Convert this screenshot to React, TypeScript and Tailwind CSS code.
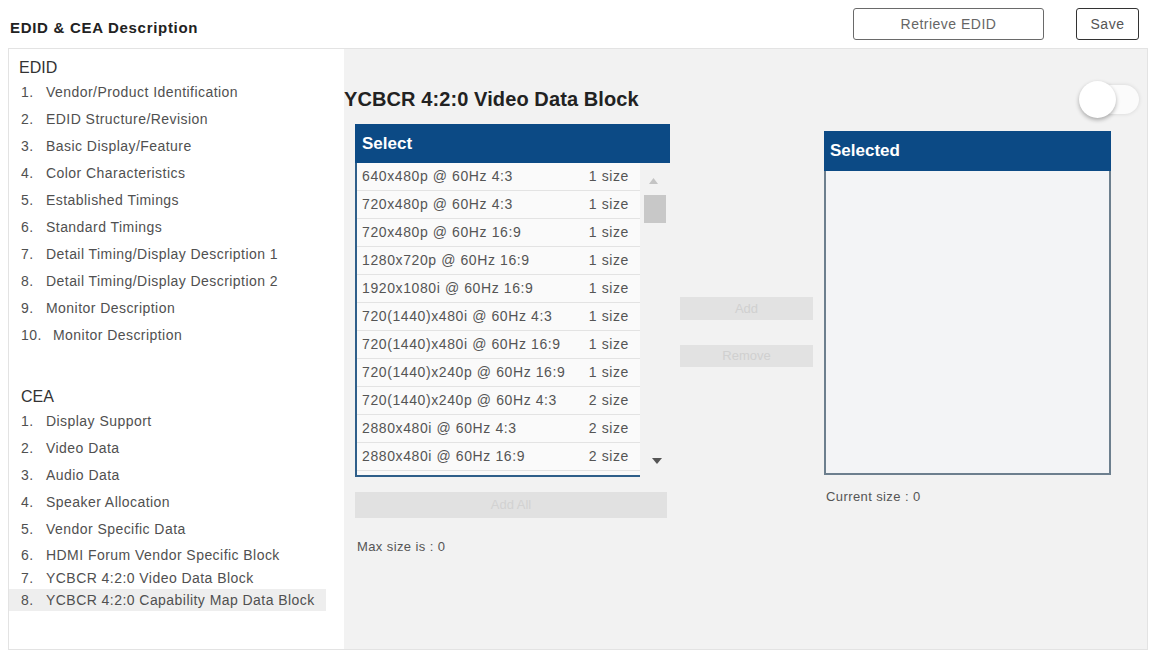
// ---------------------------------------------------------------------------
// EDID & CEA description editor
// ---------------------------------------------------------------------------

type NavItem = { num: string; label: string; row: string; numWidth?: string };

const EDID_ITEMS: NavItem[] = [
  { num: "1.", label: "Vendor/Product Identification", row: "h-[27px]" },
  { num: "2.", label: "EDID Structure/Revision", row: "h-[27px]" },
  { num: "3.", label: "Basic Display/Feature", row: "h-[27px]" },
  { num: "4.", label: "Color Characteristics", row: "h-[27px]" },
  { num: "5.", label: "Established Timings", row: "h-[27px]" },
  { num: "6.", label: "Standard Timings", row: "h-[27px]" },
  { num: "7.", label: "Detail Timing/Display Description 1", row: "h-[27px]" },
  { num: "8.", label: "Detail Timing/Display Description 2", row: "h-[27px]" },
  { num: "9.", label: "Monitor Description", row: "h-[27px]" },
  { num: "10.", label: "Monitor Description", row: "h-[27px]", numWidth: "w-[32px]" },
];

const CEA_ITEMS: NavItem[] = [
  { num: "1.", label: "Display Support", row: "h-[27px]" },
  { num: "2.", label: "Video Data", row: "h-[27px]" },
  { num: "3.", label: "Audio Data", row: "h-[27px]" },
  { num: "4.", label: "Speaker Allocation", row: "h-[27px]" },
  { num: "5.", label: "Vendor Specific Data", row: "h-[27px]" },
  { num: "6.", label: "HDMI Forum Vendor Specific Block", row: "h-[24px]" },
  { num: "7.", label: "YCBCR 4:2:0 Video Data Block", row: "h-[22px]" },
  { num: "8.", label: "YCBCR 4:2:0 Capability Map Data Block", row: "h-[22px]" },
];

const TIMINGS: [string, string][] = [
  ["640x480p @ 60Hz 4:3", "1 size"],
  ["720x480p @ 60Hz 4:3", "1 size"],
  ["720x480p @ 60Hz 16:9", "1 size"],
  ["1280x720p @ 60Hz 16:9", "1 size"],
  ["1920x1080i @ 60Hz 16:9", "1 size"],
  ["720(1440)x480i @ 60Hz 4:3", "1 size"],
  ["720(1440)x480i @ 60Hz 16:9", "1 size"],
  ["720(1440)x240p @ 60Hz 16:9", "1 size"],
  ["720(1440)x240p @ 60Hz 4:3", "2 size"],
  ["2880x480i @ 60Hz 4:3", "2 size"],
  ["2880x480i @ 60Hz 16:9", "2 size"],
];

function NavList({ items, active }: { items: NavItem[]; active?: string }) {
  return (
    <ul>
      {items.map((item) => (
        <li
          key={item.num}
          className={`${item.row} flex w-[317px] items-center pl-[12px] text-[14px] tracking-[0.45px] text-[#505050] ${
            active === item.num ? "bg-[#eeeeee]" : ""
          }`}
        >
          <span className={`${item.numWidth ?? "w-[25px]"} shrink-0`}>{item.num}</span>
          <span>{item.label}</span>
        </li>
      ))}
    </ul>
  );
}

function Toggle() {
  return (
    <div className="relative h-[37px] w-[60px]">
      <div className="absolute top-[4px] right-0 bottom-[4px] left-[12px] rounded-full bg-[#fbfbfb] shadow-[0_0_4px_rgba(0,0,0,0.12)]" />
      <div className="absolute top-0 left-0 h-[37px] w-[37px] rounded-full bg-white shadow-[0_2px_4px_rgba(0,0,0,0.3)]" />
    </div>
  );
}

export default function App() {
  return (
    <div className="h-[654px] w-[1154px] overflow-hidden bg-white font-['Liberation_Sans',Arial,sans-serif]">
      {/* top bar */}
      <div className="flex h-[48px] items-start pt-[8px] pr-[15px] pl-[10px]">
        <h1 className="mt-[10px] text-[15px] leading-[20px] font-bold tracking-[0.7px] text-[#222]">
          EDID &amp; CEA Description
        </h1>
        <div className="ml-auto flex gap-[32px]">
          <button className="h-[32px] w-[191px] rounded-[3px] border border-[#6a6a6a] bg-white text-[14px] tracking-[0.5px] text-[#666]">
            Retrieve EDID
          </button>
          <button className="h-[32px] w-[63px] rounded-[3px] border border-[#333] bg-white text-[14px] tracking-[0.5px] text-[#555]">
            Save
          </button>
        </div>
      </div>

      <div className="ml-[8px] flex h-[602px] w-[1140px] border border-[#e3e3e3]">
        {/* sidebar */}
        <aside className="w-[335px] shrink-0 bg-white pt-[8px]">
          <h2 className="flex h-[22px] items-center pl-[10px] text-[16px] text-[#333]">EDID</h2>
          <NavList items={EDID_ITEMS} />
          <h2 className="mt-[37px] flex h-[22px] items-center pl-[12px] text-[16px] text-[#333]">CEA</h2>
          <NavList items={CEA_ITEMS} active="8." />
        </aside>

        {/* main */}
        <main className="flex-1 bg-[#f2f2f2] pt-[31px]">
          <div className="flex h-[38px] items-center justify-between pr-[8px]">
            <h2 className="text-[20px] font-bold tracking-[0.1px] text-[#222]">YCBCR 4:2:0 Video Data Block</h2>
            <Toggle />
          </div>

          <div className="mt-[6px] flex pl-[11px]">
            {/* available list */}
            <div className="w-[315px] shrink-0">
              <div className="flex h-[39px] items-center bg-[#0c4a85] pl-[7px] text-[17px] font-bold text-white">
                Select
              </div>
              <div className="flex h-[314px]">
                <ul className="w-[285px] border-b-2 border-l-2 border-[#2f5f8a] bg-[#fafafa]">
                  {TIMINGS.map(([mode, size]) => (
                    <li
                      key={mode}
                      className="flex h-[28px] items-center justify-between border-b border-[#e3e3e3] pr-[11px] pl-[5px] text-[14px] tracking-[0.6px] text-[#555]"
                    >
                      <span>{mode}</span>
                      <span>{size}</span>
                    </li>
                  ))}
                </ul>
                <div className="flex w-[30px] flex-col items-center pt-[15px]">
                  <svg width="9" height="6" viewBox="0 0 9 6" className="-ml-[4px]">
                    <path d="M0 6 L4.5 0 L9 6 Z" fill="#c4c4c4" />
                  </svg>
                  <div className="mt-[11px] h-[28px] w-[22px] bg-[#c8c8c8]" />
                  <svg width="10" height="6" viewBox="0 0 10 6" className="mt-auto mb-[13px] ml-[4px]">
                    <path d="M0 0 L10 0 L5 6 Z" fill="#555" />
                  </svg>
                </div>
              </div>
              <button className="mt-[15px] h-[26px] w-[312px] bg-[#e1e1e1] text-[13px] text-[#d2d2d2]">
                Add All
              </button>
              <p className="mt-[21px] pl-[2px] text-[13px] leading-[16px] tracking-[0.4px] text-[#555]">
                Max size is : 0
              </p>
            </div>

            {/* transfer buttons */}
            <div className="ml-[10px] flex w-[133px] shrink-0 flex-col pt-[173px]">
              <button className="h-[23px] bg-[#e2e2e2] text-[13px] text-[#d0d0d0]">Add</button>
              <button className="mt-[25px] h-[22px] bg-[#e2e2e2] text-[13px] text-[#d0d0d0]">Remove</button>
            </div>

            {/* selected list */}
            <div className="mt-[7px] ml-[11px] w-[287px] shrink-0">
              <div className="flex h-[40px] items-center bg-[#0c4a85] pl-[6px] text-[17px] font-bold text-white">
                Selected
              </div>
              <div className="h-[304px] border-2 border-t-0 border-[#6d7f8e] bg-[#f3f4f6]" />
              <p className="mt-[14px] pl-[2px] text-[13px] leading-[16px] tracking-[0.4px] text-[#555]">
                Current size : 0
              </p>
            </div>
          </div>
        </main>
      </div>
    </div>
  );
}
